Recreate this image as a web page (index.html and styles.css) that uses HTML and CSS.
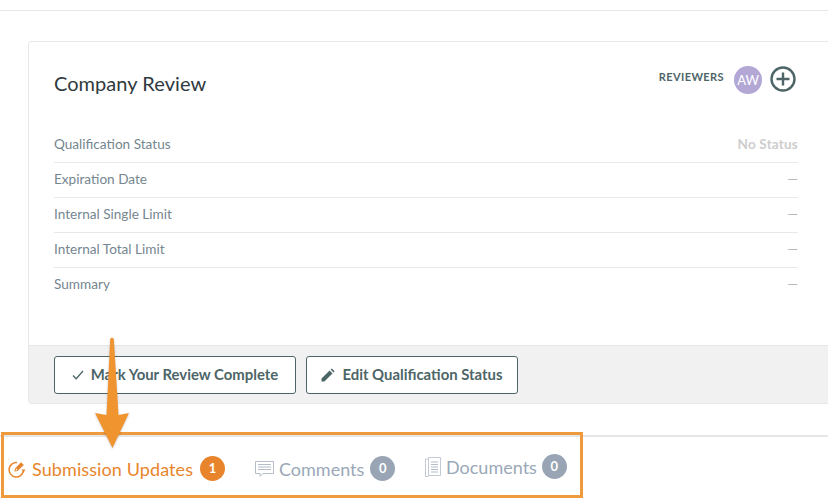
FILE: index.html
```html
<!DOCTYPE html>
<html lang="en">
<head>
<meta charset="utf-8">
<title>Company Review</title>
<link rel="stylesheet" href="styles.css">
</head>
<body>
<div class="page">
  <div class="topbar"></div>
  <section class="card">
    <header class="card-head">
      <h1 class="title">Company Review</h1>
      <div class="reviewers">
        <span class="rev-label">REVIEWERS</span>
        <span class="avatar">AW</span>
        <svg class="add" width="26" height="26" viewBox="0 0 26 26"><circle cx="13" cy="13" r="11.5" fill="none" stroke="#4d6567" stroke-width="2.4"/><path d="M13 6.5v13M6.5 13h13" stroke="#4d6567" stroke-width="2.4" fill="none"/></svg>
      </div>
    </header>
    <div class="rows">
      <div class="row"><span>Qualification Status</span><span class="status">No Status</span></div>
      <div class="row"><span>Expiration Date</span><span class="dash">—</span></div>
      <div class="row"><span>Internal Single Limit</span><span class="dash">—</span></div>
      <div class="row"><span>Internal Total Limit</span><span class="dash">—</span></div>
      <div class="row"><span>Summary</span><span class="dash">—</span></div>
    </div>
    <footer class="card-foot">
      <button class="btn btn-mark">
        <svg width="12" height="10" viewBox="0 0 12 10"><path d="M1 5.5 4.2 8.8 11 1" fill="none" stroke="#4d6567" stroke-width="1.3"/></svg>
        Mark Your Review Complete
      </button>
      <button class="btn btn-edit">
        <svg width="14" height="14" viewBox="0 0 14 14"><path d="M0.5 13.5V10.6L8.6 2.5 11.5 5.4 3.4 13.5ZM9.6 1.5 10.8 0.4 13.6 3.2 12.5 4.4Z" fill="#4d6567"/></svg>
        Edit Qualification Status
      </button>
    </footer>
  </section>
  <nav class="tabs">
    <div class="tab tab-active">
      <svg class="tab-icon" width="18" height="18" viewBox="0 0 18 18"><path d="M9 2.6A7.2 7.2 0 1 0 15.4 11" fill="none" stroke="#e8852c" stroke-width="1.5"/><path d="M6.4 11.6 7 8.4 13 2.2 15.8 5 9.6 11Z" fill="#e8852c"/><path d="M13.4 9.6H17.6L15.5 12.4Z" fill="#e8852c"/><circle cx="8.4" cy="9.6" r="0.8" fill="#fff"/></svg>
      <span class="tab-label">Submission Updates</span>
      <span class="badge badge-on">1</span>
    </div>
    <div class="tab tab-comments">
      <svg width="19" height="16" viewBox="0 0 19 16"><path d="M0.5 0.5H18.5V12.5H8L5 15.3V12.5H0.5Z" fill="none" stroke="#b4bdc9"/><path d="M3 3.5H16M3 6H16M3 8.5H16" stroke="#b4bdc9"/></svg>
      <span class="tab-label">Comments</span>
      <span class="badge">0</span>
    </div>
    <div class="tab tab-docs">
      <svg width="16" height="20" viewBox="0 0 16 20"><path d="M3.5 0.5H15.5V18.5H3.5ZM3.5 2H0.5V19.5H3.5" fill="none" stroke="#c3cad3"/><path d="M6 5H13M6 7.5H13M6 10H13M6 12.5H13M6 15H13" stroke="#b4bdc9"/></svg>
      <span class="tab-label">Documents</span>
      <span class="badge">0</span>
    </div>
  </nav>
  <div class="callout"></div>
  <svg class="arrow" width="40" height="116" viewBox="0 0 40 116"><path d="M17.2 3Q19 0 20.8 3L25.5 79 36 77 19.5 112 2 77 13.5 79Z" fill="#f09430"/></svg>
</div>
</body>
</html>
```

FILE: styles.css
```css
* { box-sizing: border-box; }
html, body { margin: 0; padding: 0; background: #fff; }
body { font-family: Lato, "Open Sans", sans-serif; color: #5d7072; }
.page { position: relative; width: 828px; height: 501px; overflow: hidden; }
.topbar { height: 11px; border-bottom: 1px solid #e6e6e6; }
.card {
  width: 830px;
  height: 363px;
  margin: 30px 0 0 28px;
  border: 1px solid #e8e8e8;
  border-radius: 3px;
  display: flex;
  flex-direction: column;
}
.card-head {
  height: 86px;
  padding: 0 61px 0 25px;
  display: flex;
  justify-content: space-between;
  align-items: flex-start;
}
.title {
  margin: 28px 0 0;
  font-size: 20px;
  line-height: 26px;
  font-weight: 400;
  color: #2f3a40;
  letter-spacing: 0.05px;
}
.reviewers { display: flex; align-items: center; margin-top: 23px; }
.rev-label { font-size: 11px; font-weight: 700; color: #4d6567; letter-spacing: 0.4px; margin-right: 10px; position: relative; top: -3px; }
.avatar {
  width: 28px; height: 28px; border-radius: 50%;
  background: #b3a7d6; color: #fff;
  font-size: 13px; line-height: 28px; text-align: center;
  margin-right: 8px;
  position: relative;
  top: 1px;
}
.rows { margin: 0 59px 0 25px; flex: 1; }
.row {
  height: 35px;
  padding-bottom: 3px;
  display: flex;
  justify-content: space-between;
  align-items: center;
  border-bottom: 1px solid #e8e8e8;
  font-size: 13.6px;
  color: #75868f;
}
.row:last-child { border-bottom-color: transparent; }
.status { font-weight: 700; color: #cdcdcd; font-size: 13.5px; letter-spacing: 0.2px; }
.dash { color: #b9b9b9; }
.card-foot {
  height: 58px;
  background: #f1f1f1;
  border-top: 1px solid #e6e6e6;
  padding: 10px 25px 0;
  display: flex;
  gap: 10px;
  align-items: flex-start;
}
.btn {
  height: 38px;
  padding: 0 0 3px;
  display: flex;
  align-items: center;
  justify-content: center;
  gap: 7px;
  background: #fff;
  border: 1px solid #4d6567;
  border-radius: 3px;
  font-family: inherit;
  font-size: 14.9px;
  font-weight: 700;
  color: #4d6567;
}
.btn svg { position: relative; top: 1px; }
.btn-mark { width: 242px; }
.btn-edit { width: 212px; }
.tabs {
  position: absolute;
  left: 0; right: 0; top: 435px;
  height: 64px;
  border-top: 2px solid #e6e6e6;
}
.tab { position: absolute; display: flex; align-items: center; }
.tab-label { font-size: 18px; color: #9aa8b8; }
.tab-active { left: 8px; top: 19px; }
.tab-active .tab-label { color: #e8852c; letter-spacing: 0.1px; margin: 0 7px 0 6px; }
.tab-comments { left: 255px; top: 19px; }
.tab-comments .tab-label { margin: 0 6px 0 5px; }
.tab-docs { left: 425px; top: 17px; }
.tab-docs .tab-label { margin: 0 5px 0 5px; }
.badge {
  width: 25px; height: 25px; border-radius: 50%;
  background: #99a5b4; color: #fff;
  font-size: 13px; font-weight: 700; line-height: 25px; text-align: center;
}
.badge-on { background: #e8852c; }
.callout {
  position: absolute;
  left: 1px; top: 432px;
  width: 582px; height: 66px;
  border: 3px solid #f09a3e;
}
.arrow { position: absolute; left: 93px; top: 336px; filter: drop-shadow(0 1px 1px rgba(0,0,0,.2)); }
```
